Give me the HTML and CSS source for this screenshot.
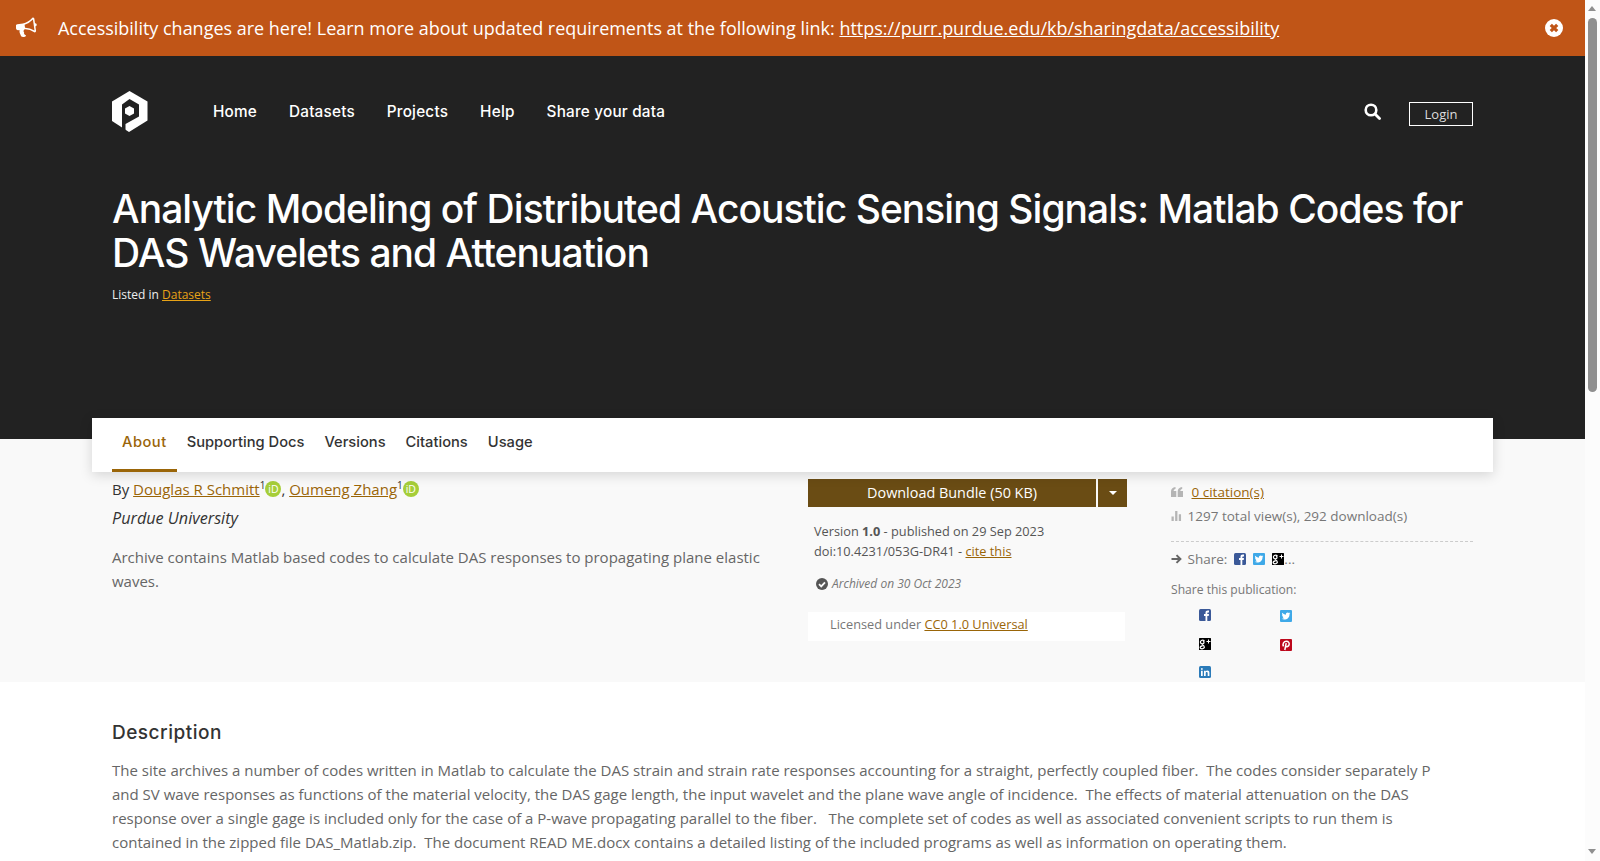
FILE: index.html
```html
<!DOCTYPE html>
<html>
<head>
<meta charset="utf-8">
<title>Analytic Modeling of Distributed Acoustic Sensing Signals</title>
<link rel="stylesheet" href="styles.css">
</head>
<body>

<svg class="defs" width="0" height="0">
  <symbol id="i-fb" viewBox="0 0 12 12"><rect width="12" height="12" rx="1.500" fill="#3b5998"/><path fill="#fff" d="M6.500 12V7H5V5h1.500V3.800C6.500 2.300 7.400 1.500 8.800 1.500H10v2H9c-.5 0-.7.2-.7.7V5H10l-.3 2H8.300v5z"/></symbol>
  <symbol id="i-tw" viewBox="0 0 12 12"><rect width="12" height="12" rx="1" fill="#3fa9e8"/><svg x="1" y="1" width="10" height="10" viewBox="0 0 1792 1792"><path fill="#fff" d="M1684 408q-67 98-162 167 1 14 1 42 0 130-38 259.500t-115.500 248.500-184.500 210.500-258 146-323 54.500q-271 0-496-145 35 4 78 4 225 0 401-138-105-2-188-64.500t-114-159.500q33 5 61 5 43 0 85-11-112-23-185.500-111.500t-73.500-205.500v-4q68 38 146 41-66-44-105-115t-39-154q0-88 44-163 121 149 294.500 238.500t371.500 99.500q-8-38-8-74 0-134 94.500-228.500t228.500-94.500q140 0 236 102 109-21 205-78-37 115-142 180 91 10 182-49z"/></svg></symbol>
  <symbol id="i-gp" viewBox="0 0 12 12"><rect width="12" height="12" rx=".5" fill="#000"/><path fill="none" stroke="#fff" stroke-width="1.300" d="M5.500 2.800C3 1.200 1 3 1.500 4.600c.5 1.500 2.500 1.700 3.300.6C5.300 4.300 5 3.200 4 2.500M3.800 6.500c-.5.700.7 1 1.300 1.800.8 1-.3 2.500-2 2.500S.8 9.600 1.500 8.700 3 8 3.500 8"/><path fill="none" stroke="#fff" stroke-width="1" d="M7.500 3.500h4M9.500 1.500v4"/></symbol>
  <symbol id="i-pin" viewBox="0 0 12 12"><rect width="12" height="12" rx="1" fill="#bd081c"/><path fill="none" stroke="#fff" stroke-width="1.500" d="M3.500 7.300C2.300 5 3.800 2.300 6.300 2.300c2.300 0 3.300 1.700 2.800 3.500-.5 1.800-2.600 2.500-3.400 1.200M6.200 4.200 4.800 11"/></symbol>
  <symbol id="i-li" viewBox="0 0 12 12"><rect width="12" height="12" rx="1.500" fill="#2b7bb9"/><path fill="#fff" d="M2 4.700h1.700V10H2zM2 2.200h1.700v1.600H2zM5 4.700h1.600v.8c.4-.6 1-1 1.800-1 1.300 0 2 .8 2 2.400V10H8.700V7.300c0-.8-.3-1.200-.9-1.200-.7 0-1.100.5-1.100 1.300V10H5z"/></symbol>
</svg>

<div class="alert">
  <svg class="alert-icon" viewBox="0 0 1792 1792"><path fill="#fff" transform="rotate(-8 896 896)" d="M1664 640q53 0 90.500 37.500t37.500 90.500-37.500 90.500-90.500 37.500v384q0 52-38 90t-90 38q-417-347-812-380-58 19-91 66t-31 100.500 40 92.500q-20 33-23 65.500t6 58 33.500 55 48 50 61.500 50.500q-29 58-111.500 83t-168.500 11.500-132-55.500q-7-23-29.500-87.500t-32-94.500-23-89-15-101 3.500-98.500 22-110.500h-122q-66 0-113-47t-47-113v-192q0-66 47-113t113-47h480q435 0 896-384 52 0 90 38t38 90v384zm-128 604v-954q-394 302-768 343v270q377 42 768 341z"/></svg>
  <span class="alert-text">Accessibility changes are here! Learn more about updated requirements at the following link: <a href="#">https://purr.purdue.edu/kb/sharingdata/accessibility</a></span>
  <svg class="alert-close" viewBox="0 0 18 18"><circle cx="9" cy="9" r="9" fill="#fff"/><path d="M5.800 5.800l6.400 6.400M12.200 5.800l-6.400 6.400" stroke="#c05517" stroke-width="3.200"/></svg>
</div>

<header class="hero">
  <div class="wrap">
    <div class="topbar">
      <svg class="logo" viewBox="0 0 36 41">
        <path fill="#fff" d="M17.500 0 35.500 10.500V29.500L17 41 0 30V10.500z"/>
        <path fill="#222" d="M17.500 8 27 13.500V25.500L13.500 33V41.500H10V13.500z"/>
        <path fill="#fff" d="M17.500 15 22 17.500V22.500L17.500 25 13 22.500V17.500z"/>
      </svg>
      <nav class="mainnav">
        <a href="#">Home</a>
        <a href="#">Datasets</a>
        <a href="#">Projects</a>
        <a href="#">Help</a>
        <a href="#">Share your data</a>
      </nav>
      <svg class="search" viewBox="0 0 17 17"><circle cx="7" cy="7" r="5.300" fill="none" stroke="#fff" stroke-width="2.600"/><path d="M11 11l4.500 4.500" stroke="#fff" stroke-width="2.800" stroke-linecap="round"/></svg>
      <a class="login" href="#">Login</a>
    </div>
    <h1>Analytic Modeling of Distributed Acoustic Sensing Signals: Matlab Codes for DAS Wavelets and Attenuation</h1>
    <p class="listed">Listed in <a href="#">Datasets</a></p>
  </div>
</header>

<section class="band">
  <div class="tabs">
    <a class="active" href="#">About</a>
    <a href="#">Supporting Docs</a>
    <a href="#">Versions</a>
    <a href="#">Citations</a>
    <a href="#">Usage</a>
  </div>
  <div class="wrap summary">
    <div class="col-main">
      <p class="authors">By <a href="#">Douglas R Schmitt</a><sup>1</sup><span class="orcid">iD</span>, <a href="#">Oumeng Zhang</a><sup>1</sup><span class="orcid">iD</span></p>
      <p class="org">Purdue University</p>
      <p class="abstract">Archive contains Matlab based codes to calculate DAS responses to propagating plane elastic waves.</p>
    </div>
    <div class="col-download">
      <div class="btn-group">
        <a class="btn" href="#">Download Bundle (50 KB)</a>
        <a class="btn-caret" href="#"><i></i></a>
      </div>
      <p class="version">Version <b>1.0</b> - published on 29 Sep 2023<br>doi:10.4231/053G-DR41 - <a href="#">cite this</a></p>
      <p class="archived">
        <svg viewBox="0 0 12 12"><circle cx="6" cy="6" r="6" fill="#555"/><path d="M3 6.200l2.200 2.200L9 4.300" fill="none" stroke="#f9f9f9" stroke-width="1.800"/></svg>
        <em>Archived on 30 Oct 2023</em>
      </p>
      <p class="license">Licensed under <a href="#">CC0 1.0 Universal</a></p>
    </div>
    <div class="col-meta">
      <p class="cites">
        <svg viewBox="0 0 12 10"><path fill="#b5b5b5" d="M0 10V4.500C0 2 1.500.5 4.500 0v2C3.200 2.300 2.700 3 2.700 4H5.300v6zM6.700 10V4.500C6.700 2 8.200.5 11.200 0v2C9.900 2.300 9.400 3 9.400 4H12v6z"/></svg>
        <a href="#">0 citation(s)</a>
      </p>
      <p class="stats">
        <svg viewBox="0 0 11 11"><path fill="#b5b5b5" d="M0 6h2.500v5H0zM4 0h2.500v11H4zM8 3.500h2.500V11H8z"/></svg>
        1297 total view(s), 292 download(s)
      </p>
      <p class="share-line">
        <svg class="arrow" viewBox="0 0 12 11"><path d="M.5 5.500h9M6 1.200l4.300 4.300L6 9.800" fill="none" stroke="#666" stroke-width="2.200"/></svg>
        Share:<svg class="ico"><use href="#i-fb"/></svg><svg class="ico"><use href="#i-tw"/></svg><svg class="ico"><use href="#i-gp"/></svg>...
      </p>
      <p class="share-title">Share this publication:</p>
      <div class="share-grid">
        <svg class="ico"><use href="#i-fb"/></svg>
        <svg class="ico low"><use href="#i-tw"/></svg>
        <svg class="ico"><use href="#i-gp"/></svg>
        <svg class="ico low"><use href="#i-pin"/></svg>
        <svg class="ico"><use href="#i-li"/></svg>
      </div>
    </div>
  </div>
</section>

<section class="wrap description">
  <h2>Description</h2>
  <p>The site archives a number of codes written in Matlab to calculate the DAS strain and strain rate responses accounting for a straight, perfectly coupled fiber.&nbsp; The codes consider separately P and SV wave responses as functions of the material velocity, the DAS gage length, the input wavelet and the plane wave angle of incidence.&nbsp; The effects of material attenuation on the DAS response over a single gage is included only for the case of a P-wave propagating parallel to the fiber.&nbsp;&nbsp; The complete set of codes as well as associated convenient scripts to run them is contained in the zipped file DAS_Matlab.zip.&nbsp; The document READ ME.docx contains a detailed listing of the included programs as well as information on operating them.</p>
</section>

<!-- page scrollbar as it shows in the capture -->
<div class="rail">
  <i class="rail-up"></i>
  <i class="rail-thumb"></i>
  <i class="rail-down"></i>
</div>

</body>
</html>
```

FILE: styles.css
```css
* { box-sizing: border-box; }

html, body { margin: 0; padding: 0; height: 861px; overflow: hidden; }
body {
  font-family: "Open Sans", sans-serif;
  font-size: 14px;
  color: #666;
  background: #fff;
  padding-right: 15px;
}
p { margin: 0; }
a { color: #9a6508; }
.defs { position: absolute; }

.wrap { width: 1361px; margin-left: 112px; }

/* alert */
.alert {
  height: 56px;
  background: #c05517;
  color: #fff;
  display: flex;
  align-items: center;
  padding: 0 22px 0 16px;
  font-size: 17.980px;
}
.alert a { color: #fff; }
.alert-icon { width: 21px; height: 21px; flex: none; margin-right: 21px; margin-top: -1px; }
.alert-text { flex: 1; }
.alert-close { width: 18px; height: 18px; flex: none; }

/* dark header */
.hero { background: #222; height: 383px; color: #fff; padding-top: 35px; }
.topbar { display: flex; align-items: center; height: 41px; }
.logo { width: 36px; height: 41px; flex: none; margin-right: 65px; }
.mainnav { display: flex; gap: 32px; flex: 1; }
.mainnav a {
  color: #fff; text-decoration: none;
  font-family: Inter, sans-serif; font-weight: 500; font-size: 15.300px; letter-spacing: .2px;
}
.search { width: 17px; height: 17px; margin-right: 28px; margin-top: -1px; }
.login {
  width: 64px; height: 24px; margin-top: 4px;
  border: 1px solid #fff;
  color: #ddd; text-decoration: none;
  font-size: 13px; line-height: 23px; text-align: center;
}
h1 {
  margin: 0;
  padding-top: 55px;
  font-family: Inter, sans-serif;
  font-weight: 500;
  font-size: 39px;
  line-height: 44px;
  letter-spacing: -.97px;
  color: #fff;
}
.listed { font-size: 12px; margin-top: 11px; color: #eee; }
.listed a { color: #e8a317; }

/* about band */
.band { background: #f9f9f9; height: 243px; display: flow-root; }
.tabs {
  width: 1401px; height: 54px;
  margin-left: 92px; margin-top: -21px;
  position: relative;
  background: #fff;
  box-shadow: 0 3px 12px rgba(0,0,0,.15);
  display: flex;
  padding-left: 20px;
}
.tabs a {
  font-family: Inter, sans-serif; font-weight: 500; font-size: 14.700px;
  color: #333; text-decoration: none;
  padding: 15px 10px 0;
}
.tabs a.active { color: #9a6508; border-bottom: 3px solid #9a6508; letter-spacing: .5px; }

.summary { display: flex; padding-top: 7px; }
.col-main { width: 696px; margin-top: -1px; }
.authors { color: #333; font-size: 15px; line-height: 22px; }
.authors sup { font-size: 10px; line-height: 0; }
.orcid {
  display: inline-block; width: 16px; height: 16px; border-radius: 50%;
  background: #a6ce39; color: #fff;
  font-size: 10.500px; line-height: 16px; text-align: center; vertical-align: 2px;
}
.org { font-style: italic; color: #333; font-size: 16.200px; margin-top: 7px; line-height: 22px; }
.abstract { font-size: 15px; line-height: 24px; margin-top: 16px; width: 660px; }

.col-download { width: 363px; }
.btn-group { display: flex; width: 319px; height: 28px; gap: 2px; }
.btn { flex: 1; background: #6a4c14; color: #fff; text-align: center; text-decoration: none; font-size: 14.400px; line-height: 28px; }
.btn-caret { width: 29px; background: #6a4c14; display: flex; align-items: center; justify-content: center; }
.btn-caret i { border: 4px solid transparent; border-top-color: #fff; border-bottom: 0; }
.version { font-size: 12.750px; line-height: 20px; color: #555; margin-top: 14px; padding-left: 6px; }
.archived { font-size: 12px; color: #777; margin-top: 14px; padding-left: 8px; display: flex; align-items: center; gap: 4px; }
.archived svg { width: 12px; height: 12px; }
.license { width: 317px; height: 29px; background: #fff; margin-top: 20px; padding-left: 22px; font-size: 12.750px; line-height: 25px; color: #777; }

.col-meta { width: 302px; font-size: 13.500px; color: #777; }
.cites svg { width: 12px; height: 10px; margin-right: 5px; }
.stats svg { width: 11px; height: 10px; margin-right: 2px; }
.cites { line-height: 20px; margin-top: 3px; }
.stats { line-height: 20px; margin-top: 4px; padding-bottom: 15px; border-bottom: 1px dashed #ccc; }
.share-line { margin-top: 7px; line-height: 20px; display: block; }
.arrow { width: 11px; height: 10px; margin-right: 2px; }
.share-title { font-size: 12.100px; margin-top: 12px; line-height: 18px; }
.share-grid { display: grid; grid-template-columns: 81px 80px; row-gap: 16.500px; padding: 10px 0 0 28px; }
.ico { display: inline-block; width: 12px; height: 12px; margin-left: 7px; vertical-align: -1px; }
.share-grid .ico { margin-left: 0; }
.share-grid .low { position: relative; top: 1px; }

/* description */
.description { width: 1325px; padding-top: 38px; }
h2 { margin: 0; font-family: Inter, sans-serif; font-weight: 500; font-size: 19px; letter-spacing: .5px; line-height: 26px; color: #333; }
.description p { font-size: 15px; line-height: 24px; margin-top: 12px; }

/* scrollbar */
.rail { position: fixed; top: 0; right: 0; width: 15px; height: 861px; background: #fcfcfc; }
.rail i { position: absolute; left: 3px; }
.rail-up { top: 6px; border: 4.500px solid transparent; border-top: 0; border-bottom: 5px solid #8f8f8f; }
.rail-thumb { top: 18px; width: 9px; height: 374px; border-radius: 5px; background: #8f8f8f; }
.rail-down { top: 849px; border: 4.500px solid transparent; border-bottom: 0; border-top: 5px solid #8f8f8f; }
```
